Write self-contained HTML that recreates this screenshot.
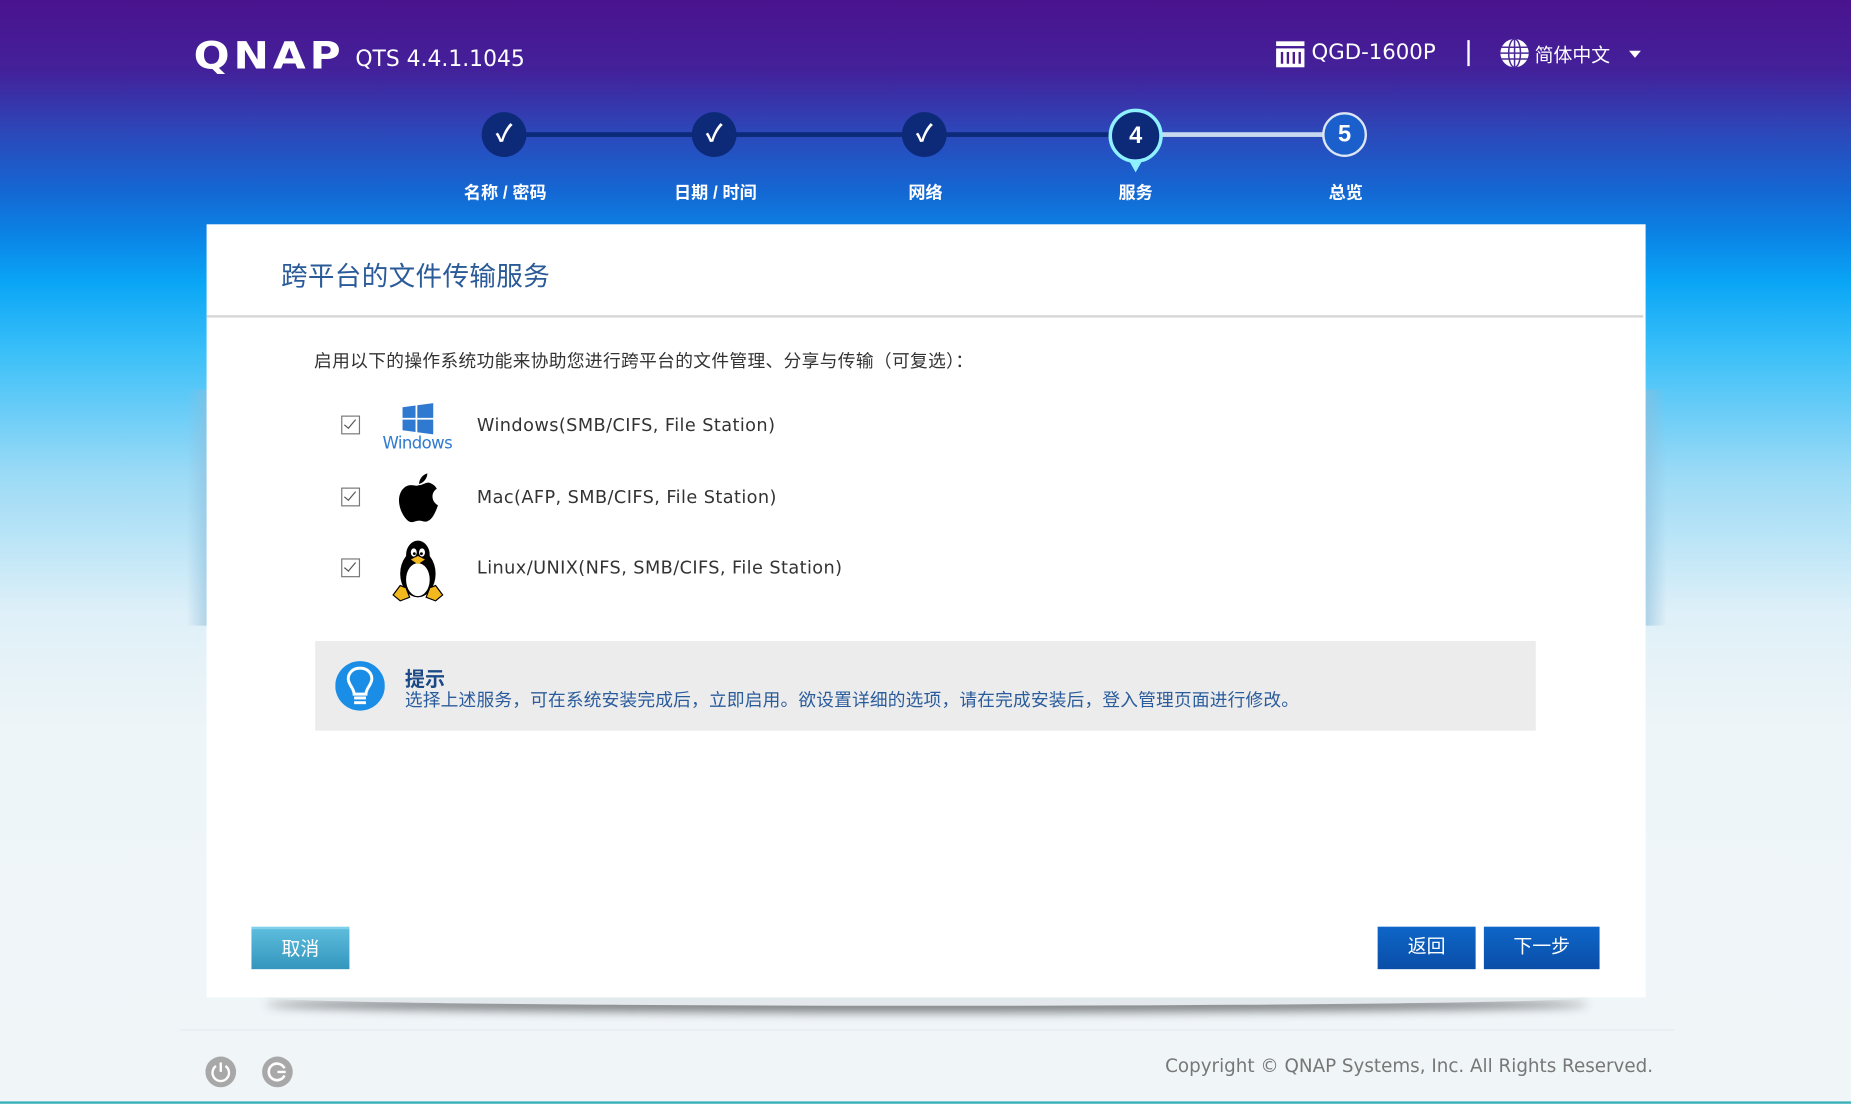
<!DOCTYPE html>
<html><head><meta charset="utf-8">
<style>
html,body{margin:0;padding:0;width:1851px;height:1104px;overflow:hidden;background:#f0f5f8;}
#w{position:absolute;left:0;top:0;width:1568px;height:935px;transform:scale(1.18049);transform-origin:0 0;
font-family:"Liberation Sans","Noto Sans CJK SC",sans-serif;
background:linear-gradient(to bottom,#4a138e 0px,#43219a 60px,#2d46b8 110px,#1566d2 160px,#0a84e6 200px,#0aa6f6 240px,#3cc0f8 300px,#9adaf6 400px,#dff0f8 520px,#eef5f8 620px,#f0f5f8 935px);}
.a{position:absolute;}
.w{color:#fff;}
.step{position:absolute;top:95px;width:38px;height:38px;border-radius:50%;background:#0c2a78;color:#fff;text-align:center;line-height:38px;font-size:20px;font-weight:bold;}
.lbl{position:absolute;top:152px;width:120px;text-align:center;color:#fff;font-weight:bold;font-size:14.5px;}
.cb{position:absolute;left:289px;width:14px;height:14px;border:1px solid #777;background:#fff;}
.cb:after{content:"";position:absolute;left:4px;top:0px;width:4px;height:9px;border-right:1.5px solid #555;border-bottom:1.5px solid #555;transform:rotate(40deg);}
.row{position:absolute;left:404px;font-family:"DejaVu Sans",sans-serif;font-size:15px;letter-spacing:0.35px;color:#333;}
.btn{position:absolute;top:785px;height:36px;line-height:36px;text-align:center;color:#fff;font-size:16px;}
</style></head><body>
<div id="w">
<div class="a" style="left:158px;top:330px;width:18px;height:200px;background:linear-gradient(to right,rgba(255,255,255,0),rgba(140,190,220,.6));"></div>
<div class="a" style="left:1394px;top:330px;width:18px;height:200px;background:linear-gradient(to left,rgba(255,255,255,0),rgba(140,190,220,.6));"></div>

<div class="a w" style="left:164px;top:28px;font-size:32px;font-weight:bold;letter-spacing:3px;font-family:'DejaVu Sans',sans-serif;transform:scaleX(1.12);transform-origin:0 0;">QNAP</div>
<div class="a w" style="left:301px;top:40px;font-size:18.5px;font-family:'DejaVu Sans',sans-serif;">QTS 4.4.1.1045</div>

<svg class="a" style="left:1080px;top:34px" width="26" height="24"><rect x="1" y="1" width="24" height="4" fill="#fff"/><rect x="1" y="7" width="24" height="16" fill="#fff"/><rect x="5" y="10" width="2" height="10" fill="#4a1a8e"/><rect x="10" y="10" width="2" height="10" fill="#4a1a8e"/><rect x="15" y="10" width="2" height="10" fill="#4a1a8e"/><rect x="20" y="10" width="2" height="10" fill="#4a1a8e"/></svg>
<div class="a w" style="left:1111px;top:34px;font-size:18px;font-family:'DejaVu Sans',sans-serif;">QGD-1600P</div>
<div class="a" style="left:1243px;top:34px;width:2px;height:22px;background:#fff;"></div>
<svg class="a" style="left:1270px;top:32px" width="26" height="26"><circle cx="13" cy="13" r="12" fill="#fff"/><g stroke="#4a2a96" stroke-width="1.3" fill="none"><ellipse cx="13" cy="13" rx="5" ry="12"/><line x1="13" y1="1" x2="13" y2="25"/><line x1="2" y1="8" x2="24" y2="8"/><line x1="1" y1="13" x2="25" y2="13"/><line x1="2" y1="18" x2="24" y2="18"/></g></svg>
<div class="a w" style="left:1300px;top:33px;font-size:16px;">简体中文</div>
<div class="a" style="left:1380px;top:43px;border-left:5px solid transparent;border-right:5px solid transparent;border-top:6px solid #fff;"></div>

<div class="a" style="left:427px;top:112px;width:534px;height:4px;background:#0c2a78;"></div>
<div class="a" style="left:961px;top:112px;width:178px;height:4px;background:#c8d8f0;"></div>
<div class="step" style="left:408px;">✓</div>
<div class="step" style="left:586px;">✓</div>
<div class="step" style="left:764px;">✓</div>
<div class="a" style="left:953px;top:130px;border-left:9px solid transparent;border-right:9px solid transparent;border-top:16px solid #8ff0ff;"></div>
<div class="step" style="left:939px;top:92px;width:40px;height:40px;line-height:40px;border:3px solid #8ff0ff;">4</div>
<div class="step" style="left:1120px;top:95px;width:34px;height:34px;line-height:34px;border:2px solid #dde6f4;background:#1a5fcc;">5</div>
<div class="lbl" style="left:368px;">名称 / 密码</div>
<div class="lbl" style="left:546px;">日期 / 时间</div>
<div class="lbl" style="left:724px;">网络</div>
<div class="lbl" style="left:902px;">服务</div>
<div class="lbl" style="left:1080px;">总览</div>

<div class="a" style="left:225px;top:838px;width:1120px;height:14px;border-radius:50%;box-shadow:0 6px 8px rgba(0,0,0,.45);background:rgba(0,0,0,0.05);"></div>
<div class="a" style="left:175px;top:190px;width:1219px;height:655px;background:#fff;"></div>
<div class="a" style="left:238px;top:217px;font-size:22.5px;letter-spacing:0.3px;color:#2a5a98;">跨平台的文件传输服务</div>
<div class="a" style="left:175px;top:267px;width:1217px;height:2px;background:#d6d6d6;"></div>
<div class="a" style="left:266px;top:295px;font-size:15px;letter-spacing:0.3px;color:#333;">启用以下的操作系统功能来协助您进行跨平台的文件管理、分享与传输（可复选）：</div>

<div class="cb" style="top:352px;"></div>
<div class="cb" style="top:413px;"></div>
<div class="cb" style="top:473px;"></div>

<svg class="a" style="left:340px;top:341px" width="28" height="28"><path d="M1 4 L12 2.5 V13 H1Z M13.5 2.3 L27 0.5 V13 H13.5Z M1 14.5 H12 V25 L1 23.5Z M13.5 14.5 H27 V27 L13.5 25.2Z" fill="#2f7ad0"/></svg>
<div class="a" style="left:324px;top:368px;font-size:14px;color:#2f7ad0;font-family:'DejaVu Sans',sans-serif;letter-spacing:-0.5px;">Windows</div>

<svg class="a" style="left:336px;top:400px" width="38" height="44" viewBox="0 0 38 44"><path d="M19 11 C22 11 25 8 28 9 C31 10 33 12 34 14 C29 17 29 25 35 28 C33 34 30 40 27 41 C24 43 22 41 19 41 C16 41 14 43 11 42 C7 40 2 32 2 24 C2 16 7 11 12 11 C15 11 17 12 19 11Z" fill="#000"/><path d="M19 10 C19 6 22 2 26 1 C26 5 23 9 19 10Z" fill="#000"/></svg>

<svg class="a" style="left:331px;top:456px" width="46" height="54" viewBox="0 0 46 54"><ellipse cx="23" cy="30" rx="15" ry="20" fill="#000"/><ellipse cx="23" cy="14" rx="10" ry="12" fill="#000"/><ellipse cx="23" cy="35" rx="10" ry="14" fill="#fff"/><ellipse cx="19.5" cy="12" rx="2.5" ry="3.5" fill="#fff"/><ellipse cx="26.5" cy="12" rx="2.5" ry="3.5" fill="#fff"/><circle cx="20" cy="13" r="1.2" fill="#000"/><circle cx="26" cy="13" r="1.2" fill="#000"/><path d="M17 18 L23 15 L29 18 L23 22Z" fill="#f3b81e"/><path d="M2 48 L8 40 L13 42 L16 50 L8 53Z" fill="#f3b81e" stroke="#000" stroke-width="1"/><path d="M44 48 L38 40 L33 42 L30 50 L38 53Z" fill="#f3b81e" stroke="#000" stroke-width="1"/></svg>

<div class="row" style="top:351px;">Windows(SMB/CIFS, File Station)</div>
<div class="row" style="top:412px;">Mac(AFP, SMB/CIFS, File Station)</div>
<div class="row" style="top:472px;">Linux/UNIX(NFS, SMB/CIFS, File Station)</div>

<div class="a" style="left:267px;top:543px;width:1034px;height:76px;background:#ececec;"></div>
<svg class="a" style="left:284px;top:559px" width="42" height="44" viewBox="0 0 42 44"><circle cx="21" cy="22" r="21" fill="#1a8ee6"/><path d="M21 7 C14 7 11 12 11 16 C11 21 16 24 16 29 H26 C26 24 31 21 31 16 C31 12 28 7 21 7Z" fill="none" stroke="#fff" stroke-width="2.5"/><rect x="16" y="31" width="10" height="2.5" fill="#fff"/><rect x="16" y="35" width="10" height="2.5" fill="#fff"/></svg>
<div class="a" style="left:343px;top:561px;font-size:17px;font-weight:bold;color:#1c4a86;">提示</div>
<div class="a" style="left:343px;top:582px;font-size:15px;letter-spacing:0.15px;color:#2a5c9c;">选择上述服务，可在系统安装完成后，立即启用。欲设置详细的选项，请在完成安装后，登入管理页面进行修改。</div>

<div class="btn" style="left:213px;width:83px;background:linear-gradient(#5cbcdc,#3596be);border-top:2px solid #7fd0ea;height:34px;">取消</div>
<div class="btn" style="left:1167px;width:83px;background:linear-gradient(#0e66c8,#0a4ea8);">返回</div>
<div class="btn" style="left:1257px;width:98px;background:linear-gradient(#0e66c8,#0a4ea8);">下一步</div>

<div class="a" style="left:152px;top:872px;width:1266px;height:1px;background:#e2ecf0;"></div>
<svg class="a" style="left:174px;top:895px" width="28" height="28"><circle cx="13" cy="13" r="13" fill="#a8a8a8"/><path d="M9 8 A7 7 0 1 0 17 8" fill="none" stroke="#fff" stroke-width="2"/><line x1="13" y1="5" x2="13" y2="13" stroke="#fff" stroke-width="2"/></svg>
<svg class="a" style="left:222px;top:895px" width="28" height="28"><circle cx="13" cy="13" r="13" fill="#a8a8a8"/><path d="M19 10 A7 7 0 1 0 19 16" fill="none" stroke="#fff" stroke-width="2.2"/><line x1="13" y1="13" x2="20" y2="13" stroke="#fff" stroke-width="2"/></svg>
<div class="a" style="left:987px;top:894px;font-size:15.5px;color:#777;font-family:'DejaVu Sans',sans-serif;">Copyright © QNAP Systems, Inc. All Rights Reserved.</div>
<div class="a" style="left:0;top:933px;width:1568px;height:2px;background:#3ab0b8;"></div>
</div>
</body></html>
